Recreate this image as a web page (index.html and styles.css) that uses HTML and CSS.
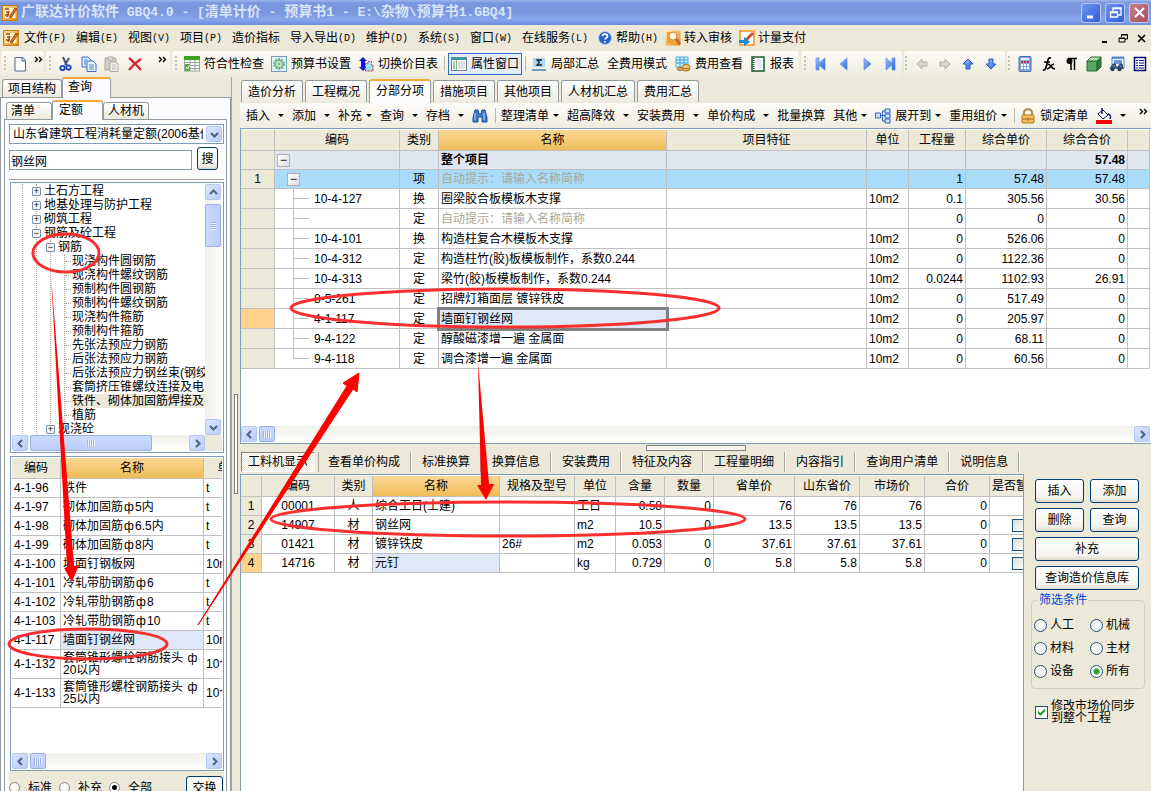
FILE: index.html
```html
<!DOCTYPE html>
<html lang="zh-CN">
<head>
<meta charset="utf-8">
<title>广联达计价软件 GBQ4.0</title>
<link rel="stylesheet" href="styles.css">
</head>
<body>
<svg class="defs" width="0" height="0" aria-hidden="true">
  <defs>
    <linearGradient id="gold" x1="0" y1="0" x2="1" y2="1"><stop offset="0" stop-color="#ffe9a8"/><stop offset="1" stop-color="#e58a10"/></linearGradient>
    <linearGradient id="blue" x1="0" y1="0" x2="1" y2="1"><stop offset="0" stop-color="#9cc4ff"/><stop offset="1" stop-color="#2a66d8"/></linearGradient>
    <symbol id="app" viewBox="0 0 16 16"><rect x=".5" y=".5" width="15" height="15" fill="url(#gold)" stroke="#c87d12"/><rect x="2.500" y="3" width="11" height="10" fill="#fff3cf"/><path d="M3 4h4M4 7h3M3 10h4M5 12l2-6M9 12l4-8" stroke="#a64b10" stroke-width="1.500" fill="none"/><path d="M7 12l6-9 2 1-6 9z" fill="#d9781a" stroke="#7a3607" stroke-width=".7"/></symbol>
    <symbol id="left" viewBox="0 0 9 9"><path d="M6 1L2.500 4.500 6 8" fill="none" stroke="#4d6185" stroke-width="2"/></symbol>
    <symbol id="right" viewBox="0 0 9 9"><path d="M3 1l3.500 3.500L3 8" fill="none" stroke="#4d6185" stroke-width="2"/></symbol>
    <symbol id="up" viewBox="0 0 9 9"><path d="M1 6l3.500-3.500L8 6" fill="none" stroke="#4d6185" stroke-width="2"/></symbol>
    <symbol id="down" viewBox="0 0 9 9"><path d="M1 3l3.500 3.500L8 3" fill="none" stroke="#4d6185" stroke-width="2"/></symbol>
    <symbol id="more" viewBox="0 0 9 7"><path d="M1 1l2.500 2.500L1 6M5 1l2.500 2.500L5 6" fill="none" stroke="#000" stroke-width="1.400"/></symbol>
  </defs>
</svg>

<header class="titlebar">
  <svg class="ic"><use href="#app"/></svg>
  <h1><span>广联达计价软件</span> GBQ4.0 - [<span>清单计价</span> - <span>预算书</span>1 - E:\<span>杂物</span>\<span>预算书</span>1.GBQ4]</h1>
  <div class="winbtns">
    <button aria-label="最小化"><svg width="17" height="17"><path d="M4 13h6" stroke="#fff" stroke-width="3"/></svg></button>
    <button aria-label="还原"><svg width="17" height="17"><path d="M6 7V4h8v7h-3M6 4.500h8M3.500 8h7v5h-7zM3.500 8.500h7" stroke="#fff" fill="none" stroke-width="1.300"/></svg></button>
    <button class="close" aria-label="关闭"><svg width="17" height="17"><path d="M4 4l9 9M13 4l-9 9" stroke="#fff" stroke-width="2"/></svg></button>
  </div>
</header>

<nav class="menubar">
  <svg class="ic"><use href="#app"/></svg>
  <button class="m1">文件<i>(F)</i></button><button class="m1">编辑<i>(E)</i></button><button class="m1">视图<i>(V)</i></button><button class="m1">项目<i>(P)</i></button><button class="m2">造价指标</button><button class="m3">导入导出<i>(D)</i></button><button class="m1">维护<i>(D)</i></button><button class="m1">系统<i>(S)</i></button><button class="m1">窗口<i>(W)</i></button><button class="m3">在线服务<i>(L)</i></button>
  <button class="m4"><svg class="ic" viewBox="0 0 16 16"><circle cx="8" cy="8" r="6.500" fill="#2464d2" stroke="#b9cdf2"/><path d="M5.500 6.300c0-3 5-3 5 0 0 1.700-2.500 1.700-2.500 3.200M8 11v1.600" stroke="#fff" stroke-width="1.700" fill="none"/></svg>帮助<i>(H)</i></button>
  <button class="m4"><svg class="ic" viewBox="0 0 16 16"><rect x=".5" y=".5" width="15" height="15" fill="url(#gold)"/><path d="M2 2h7v11H2z" fill="#f0a22c"/><circle cx="8" cy="6" r="4" fill="#fff6dd" stroke="#d08a3c"/><path d="M11 9l4 5" stroke="#b06a30" stroke-width="2.500"/></svg>转入审核</button>
  <button class="m4"><svg class="ic" viewBox="0 0 16 16"><path d="M1 1h14v14H1z" fill="#fff" stroke="#f0941c" stroke-width="1.500"/><path d="M6 9l7-7 2 2-7 7z" fill="#d34b22"/><path d="M0 10h5V7l6 5-6 4v-3H0z" fill="#2389d4"/></svg>计量支付</button>
  <div class="mdibtns">
    <button aria-label="最小化子窗口"><svg width="11" height="11"><path d="M2 9h5" stroke="#000" stroke-width="2"/></svg></button>
    <button aria-label="还原子窗口"><svg width="11" height="11"><path d="M3.500 4V1.500h6V6H7M1 5h6v4H1zM1 5.500h6M3.500 2h6" stroke="#000" fill="none"/></svg></button>
    <button aria-label="关闭子窗口"><svg width="11" height="11"><path d="M2 2l7 7M9 2L2 9" stroke="#000" stroke-width="1.600"/></svg></button>
  </div>
</nav>

<div class="toolbars">
  <div class="bar g1"><b class="grip"></b>
    <button aria-label="新建"><svg class="ic" viewBox="0 0 16 16"><path d="M3 1.500h8l2.500 3V15H3z" fill="#fff" stroke="#52688c"/><path d="M10 1.500V5h3.500" fill="#c9d6ea" stroke="#52688c"/></svg></button>
    <button class="chev" aria-label="更多"><svg width="9" height="7"><use href="#more"/></svg></button>
  </div>
  <div class="bar g2"><b class="grip"></b>
    <button aria-label="剪切"><svg class="ic" viewBox="0 0 16 16"><path d="M5 1l4 9M11 2L7 9" stroke="#46586e" stroke-width="2"/><circle cx="4.500" cy="12" r="2.200" fill="none" stroke="#1542b8" stroke-width="1.800"/><circle cx="10.500" cy="11.500" r="2.200" fill="none" stroke="#1542b8" stroke-width="1.800"/></svg></button>
    <button aria-label="复制"><svg class="ic" viewBox="0 0 16 16"><path d="M1 1h6l3 3v7H1z" fill="#d9e8ff" stroke="#3f72c4"/><path d="M6 5h6l3 3v7.500H6z" fill="#eaf3ff" stroke="#3f72c4"/><path d="M8 9h5M8 11h5M8 13h5M3 4h3M3 6h2M3 8h2" stroke="#4d86dd"/></svg></button>
    <button aria-label="粘贴"><svg class="ic" viewBox="0 0 16 16"><path d="M1 2h11v12H1z" fill="#cfcdc4" stroke="#aaa89e"/><path d="M4 1h5v3H4z" fill="#e8e6de" stroke="#aaa89e"/><path d="M6 6h6l2 2v7.500H6z" fill="#f2f1ec" stroke="#aaa89e"/><path d="M8 9h4M8 11h4M8 13h4" stroke="#bbb"/></svg></button>
    <button aria-label="删除"><svg class="ic" viewBox="0 0 16 16"><path d="M2 2c4 3 8 8 12 12M14 3C9 6 5 10 2 14" stroke="#d81e30" stroke-width="2.200" fill="none"/></svg></button>
    <button class="chev" aria-label="更多"><svg width="9" height="7"><use href="#more"/></svg></button>
  </div>
  <div class="bar g3"><b class="grip"></b>
    <button><svg class="ic" viewBox="0 0 16 16"><rect x=".5" y="1" width="15" height="14" fill="#fff" stroke="#9aa5a0"/><path d="M0 0h16v4H0z" fill="#3fa51c"/><path d="M0 6.500h16M0 9.500h16M0 12.500h16M6 4v11M11 4v11" stroke="#90a49a"/><path d="M1 8h5v7H1z" fill="#65a944"/><path d="M2 11l1.500 2L6 9" stroke="#fff" fill="none"/></svg>符合性检查</button>
    <button><svg class="ic" viewBox="0 0 16 16"><rect x=".5" y=".5" width="15" height="15" fill="#e6f1f6" stroke="#6c9cc4"/><circle cx="8" cy="8" r="4.800" fill="none" stroke="#5aab6c" stroke-width="2" stroke-dasharray="2 1"/><circle cx="8" cy="8" r="3.500" fill="#d7efdb" stroke="#5aab6c"/><circle cx="8" cy="8" r="1" fill="#fff" stroke="#5aab6c"/></svg>预算书设置</button>
    <button><svg class="ic" viewBox="0 0 16 16"><path d="M5 1l4 4H7v6h2l-4 4-4-4h2V5H1z" fill="#1212d8"/><path d="M7.500 15V7h3V5.500h3V9H15v6z" fill="#9fe3ea" stroke="#e02c2c" stroke-dasharray="2 1"/></svg>切换价目表</button>
    <b class="sep"></b>
    <button class="on"><svg class="ic" viewBox="0 0 16 16"><rect x=".5" y="1.500" width="15" height="13" fill="#fff" stroke="#6b7f90"/><path d="M1 1h14v3H1z" fill="#3c9ba2"/><path d="M5.500 4v10" stroke="#9aa"/><path d="M2 6h2M2 8h2M2 10h2M2 12h2" stroke="#3da243"/><path d="M7 6h7M7 8h7M7 10h7M7 12h7" stroke="#b5c6c9"/></svg>属性窗口</button>
    <b class="sep"></b>
    <button><svg class="ic" viewBox="0 0 16 16"><path d="M2 2h12v9H2z" fill="#a9dbf2"/><path d="M1 13h14v2H1z" fill="#6d9cb4"/><path d="M11 4H6l2.500 2.500L6 9h5" fill="none" stroke="#222" stroke-width="1.300"/></svg>局部汇总</button>
    <button class="plain">全费用模式</button>
    <button><svg class="ic" viewBox="0 0 16 16"><path d="M1 1h12v10H1z" fill="#dff2fd" stroke="#4fa3dc"/><path d="M1 4h12M1 7h12M5 1v10M9 1v10" stroke="#5db4ea" stroke-width="1.500"/><ellipse cx="11" cy="13" rx="4" ry="2" fill="#e3b04e" stroke="#a8752a"/><ellipse cx="11" cy="10.500" rx="4" ry="2" fill="#f3cf7d" stroke="#a8752a"/><ellipse cx="5" cy="13" rx="3" ry="1.500" fill="#e3b04e" stroke="#a8752a"/></svg>费用查看</button>
    <button><svg class="ic" viewBox="0 0 16 16"><rect x="2" y="1" width="12" height="14" fill="#fff" stroke="#1c5a2a" stroke-width="1.500"/><path d="M3.500 2v13" stroke="#1c5a2a" stroke-dasharray="1 1" stroke-width="2"/><path d="M6 4h6M6 6h6M6 8h6M6 10h6M6 12h6" stroke="#ccd8e8"/></svg>报表</button>
  </div>
  <div class="bar g4"><b class="grip"></b>
    <button aria-label="首条"><svg class="ic" viewBox="0 0 16 16"><path d="M3 2h3v5l6-5v12L6 9v5H3z" fill="url(#blue)" stroke="#4b80dc" stroke-width=".6"/></svg></button>
    <button aria-label="上一条"><svg class="ic" viewBox="0 0 16 16"><path d="M11 2v12L4 8z" fill="url(#blue)" stroke="#4b80dc" stroke-width=".6"/></svg></button>
    <button aria-label="下一条"><svg class="ic" viewBox="0 0 16 16"><path d="M5 2v12l7-6z" fill="url(#blue)" stroke="#4b80dc" stroke-width=".6"/></svg></button>
    <button aria-label="末条"><svg class="ic" viewBox="0 0 16 16"><path d="M13 2h-3v5L4 2v12l6-5v5h3z" fill="url(#blue)" stroke="#4b80dc" stroke-width=".6"/></svg></button>
  </div>
  <div class="bar g5"><b class="grip"></b>
    <button aria-label="左移"><svg class="ic" viewBox="0 0 16 16"><path d="M3 8l5-5v3h5v4H8v3z" fill="#d6d5cf" stroke="#b0aea6"/></svg></button>
    <button aria-label="右移"><svg class="ic" viewBox="0 0 16 16"><path d="M13 8L8 3v3H3v4h5v3z" fill="#d6d5cf" stroke="#b0aea6"/></svg></button>
    <button aria-label="上移"><svg class="ic" viewBox="0 0 16 16"><path d="M8 3l5 5h-3v5H6V8H3z" fill="url(#blue)" stroke="#2458c4"/></svg></button>
    <button aria-label="下移"><svg class="ic" viewBox="0 0 16 16"><path d="M8 13l5-5h-3V3H6v5H3z" fill="url(#blue)" stroke="#2458c4"/></svg></button>
  </div>
  <div class="bar g6"><b class="grip"></b>
    <button aria-label="计算器"><svg class="ic" viewBox="0 0 16 16"><rect x="2" y=".5" width="12" height="15" rx="1" fill="#86a8e2" stroke="#4868a8"/><path d="M4 3h8" stroke="#e8f2ff" stroke-width="2"/><path d="M4 6h8" stroke="#d43030" stroke-width="2" stroke-dasharray="2 1"/><path d="M4 9h8M4 12h8" stroke="#fff" stroke-width="2" stroke-dasharray="2 1"/></svg></button>
    <button aria-label="函数"><svg class="ic" viewBox="0 0 16 16"><path d="M11 2C8 1 8 4 7 8s-2 7-4 6M4 6h6M8 8c3 0 3 5 7 5M14 8c-3 0-4 5-7 5" stroke="#000" stroke-width="1.700" fill="none"/></svg></button>
    <button aria-label="段落"><svg class="ic" viewBox="0 0 16 16"><path d="M8 2v12M11.500 2v12M5 2.500h9" stroke="#000" stroke-width="1.500"/><circle cx="6.500" cy="5" r="3" fill="#000"/></svg></button>
    <button aria-label="模型"><svg class="ic" viewBox="0 0 16 16"><path d="M1 5h10v10H1z" fill="#58a463" stroke="#256a31"/><path d="M1 5l4-4h10l-4 4z" fill="#b5dfb5" stroke="#256a31"/><path d="M11 5l4-4v10l-4 4z" fill="#2f7a3c" stroke="#256a31"/></svg></button>
    <button aria-label="查找"><svg class="ic" viewBox="0 0 16 16"><path d="M3 1h12v11H3z" fill="#f0f6ff" stroke="#5c88cf"/><path d="M3 2h12M5 5h8M5 7h8" stroke="#3e74cf" stroke-width="1.500"/><path d="M1 13l3-5h2l1 3h2l2-3h2l1 5" fill="#53708f" stroke="#1f3752"/><circle cx="3.500" cy="13" r="2.200" fill="#24405e"/><circle cx="10.500" cy="13" r="2.200" fill="#24405e"/></svg></button>
    <button aria-label="清单"><svg class="ic" viewBox="0 0 16 16"><rect x="2.500" y="1.500" width="11" height="13" fill="#fff" stroke="#06067a" stroke-width="1.500"/><path d="M4 4.500h2M7 4.500h5M4 7h2M7 7h5M4 9.500h2M7 9.500h5M4 12h2M7 12h5" stroke="#06067a"/></svg></button>
  </div>
</div>

<main class="work">
  <aside class="side">
    <div class="tabs outer-tabs"><button class="tab">项目结构</button><button class="tab active">查询</button></div>
    <div class="outer">
      <div class="tabs inner-tabs"><button class="tab">清单</button><button class="tab active">定额</button><button class="tab">人材机</button></div>
      <div class="inner">
        <div class="pick"><select aria-label="定额库"><option>山东省建筑工程消耗量定额(2006基价)</option></select><span class="sbtn"><svg width="9" height="9"><use href="#down"/></svg></span></div>
        <div class="search"><input type="text" value="钢丝网" aria-label="搜索内容"><button class="xp">搜</button></div>
        <div class="tree">
          <div class="tree-view">
            <ul class="root"><li><ul>
              <li><div class="node"><button class="tg" aria-label="展开">+</button>土石方工程</div></li>
              <li><div class="node"><button class="tg" aria-label="展开">+</button>地基处理与防护工程</div></li>
              <li><div class="node"><button class="tg" aria-label="展开">+</button>砌筑工程</div></li>
              <li><div class="node"><button class="tg" aria-label="折叠">−</button>钢筋及砼工程</div>
                <ul>
                  <li><div class="node"><button class="tg" aria-label="折叠">−</button>钢筋</div>
                    <ul>
                      <li class="leaf"><span>现浇构件圆钢筋</span></li>
                      <li class="leaf"><span>现浇构件螺纹钢筋</span></li>
                      <li class="leaf"><span>预制构件圆钢筋</span></li>
                      <li class="leaf"><span>预制构件螺纹钢筋</span></li>
                      <li class="leaf"><span>现浇构件箍筋</span></li>
                      <li class="leaf"><span>预制构件箍筋</span></li>
                      <li class="leaf"><span>先张法预应力钢筋</span></li>
                      <li class="leaf"><span>后张法预应力钢筋</span></li>
                      <li class="leaf"><span>后张法预应力钢丝束(钢绞线)</span></li>
                      <li class="leaf"><span>套筒挤压锥螺纹连接及电</span></li>
                      <li class="leaf sel"><span>铁件、砌体加固筋焊接及</span></li>
                      <li class="leaf"><span>植筋</span></li>
                    </ul>
                  </li>
                  <li><div class="node"><button class="tg" aria-label="展开">+</button>现浇砼</div></li>
                </ul>
              </li>
            </ul></li></ul>
          </div>
          <div class="vbar"><span class="sbtn"><svg width="9" height="9"><use href="#up"/></svg></span><span class="vthumb"></span><span class="sbtn end"><svg width="9" height="9"><use href="#down"/></svg></span></div>
          <div class="hbar"><span class="sbtn"><svg width="9" height="9"><use href="#left"/></svg></span><span class="hthumb long"></span><span class="sbtn end"><svg width="9" height="9"><use href="#right"/></svg></span></div>
          <div class="corner"></div>
        </div>
        <div class="quota">
          <div class="clip">
          <table class="grid quota-grid">
            <colgroup><col class="q1"><col class="q2"><col class="q3"></colgroup>
            <thead><tr><th>编码</th><th class="hot">名称</th><th>单位</th></tr></thead>
            <tbody>
              <tr><td>4-1-96</td><td>铁件</td><td>t</td></tr>
              <tr><td>4-1-97</td><td>砌体加固筋<i class="phi">ф</i>5内</td><td>t</td></tr>
              <tr><td>4-1-98</td><td>砌体加固筋<i class="phi">ф</i>6.5内</td><td>t</td></tr>
              <tr><td>4-1-99</td><td>砌体加固筋<i class="phi">ф</i>8内</td><td>t</td></tr>
              <tr><td>4-1-100</td><td>墙面钉钢板网</td><td>10m2</td></tr>
              <tr><td>4-1-101</td><td>冷轧带肋钢筋<i class="phi">ф</i>6</td><td>t</td></tr>
              <tr><td>4-1-102</td><td>冷轧带肋钢筋<i class="phi">ф</i>8</td><td>t</td></tr>
              <tr><td>4-1-103</td><td>冷轧带肋钢筋<i class="phi">ф</i>10</td><td>t</td></tr>
              <tr><td>4-1-117</td><td class="pale">墙面钉钢丝网</td><td>10m2</td></tr>
              <tr class="tall"><td>4-1-132</td><td>套筒锥形螺栓钢筋接头 <i class="phi">ф</i><br>20以内</td><td>10个</td></tr>
              <tr class="tall"><td>4-1-133</td><td>套筒锥形螺栓钢筋接头 <i class="phi">ф</i><br>25以内</td><td>10个</td></tr>
            </tbody>
          </table>
          </div>
          <div class="hbar"><span class="sbtn"><svg width="9" height="9"><use href="#left"/></svg></span><span class="hthumb"></span><span class="sbtn end"><svg width="9" height="9"><use href="#right"/></svg></span></div>
        </div>
        <div class="scope">
          <label><input type="radio" name="scope">标准</label><label><input type="radio" name="scope">补充</label><label><input type="radio" name="scope" checked>全部</label>
          <button class="xp">交换</button>
        </div>
      </div>
    </div>
  </aside>
  <div class="vsplit"><span></span></div>

  <section class="content">
    <div class="tabs main-tabs"><button class="tab">造价分析</button><button class="tab">工程概况</button><button class="tab active">分部分项</button><button class="tab">措施项目</button><button class="tab">其他项目</button><button class="tab">人材机汇总</button><button class="tab">费用汇总</button></div>
    <div class="actions">
      <button class="dd wide">插入</button><button class="dd wide">添加</button><button class="dd">补充</button><button class="dd wide">查询</button><button class="dd wide">存档</button>
      <button aria-label="查找"><svg class="ic" viewBox="0 0 16 16"><path d="M3 2h3l1 4h2l1-4h3l2 8v4H10V9H6v5H1v-4z" fill="#3f78cf" stroke="#1d4a92"/><path d="M3 5v7M12 5v7" stroke="#b7d5ff"/></svg></button>
      <b class="sep"></b>
      <button class="dd">整理清单</button><button class="dd wide">超高降效</button><button class="dd wide">安装费用</button><button class="dd wide">单价构成</button><button>批量换算</button><button class="dd">其他</button>
      <button class="dd"><svg class="ic" viewBox="0 0 16 16"><path d="M0.500 5h5v5h-5zM10 1h5v4h-5zM10 6h5v4h-5zM10 11h5v4h-5z" fill="#cfe3ff" stroke="#2b62b8"/><path d="M5 7.500h5M7.500 7.500V3H10M7.500 7.500V13H10" stroke="#2b62b8" fill="none"/></svg>展开到</button><button class="dd">重用组价</button>
      <b class="sep"></b>
      <button><svg class="ic" viewBox="0 0 16 16"><path d="M4 8V5c0-5 8-5 8 0v3" fill="none" stroke="#b58c3f" stroke-width="2"/><rect x="2" y="7" width="12" height="8" rx="1" fill="#f3c15a" stroke="#b07a1c"/><path d="M8 9v4M2 11h12" stroke="#a26c14"/></svg>锁定清单</button>
      <button class="dd wide" aria-label="填充颜色"><svg class="ic" viewBox="0 0 16 16"><path d="M2 6l5-4 5 5-5 4z" fill="#fff" stroke="#111a70"/><path d="M6 0v6M12 6c3 1 3 3 2 5" stroke="#111a70" fill="none" stroke-width="1.500"/><path d="M0 12h16v4H0z" fill="#f00"/></svg></button>
      <button class="chev" aria-label="更多"><svg width="9" height="7"><use href="#more"/></svg></button>
    </div>

    <div class="upper">
      <div class="clip">
      <table class="grid bill">
        <colgroup><col class="b1"><col class="b2"><col class="b3"><col class="b4"><col><col class="b6"><col class="b7"><col class="b8"><col class="b9"><col class="b10"></colgroup>
        <thead><tr><th></th><th>编码</th><th>类别</th><th class="hot">名称</th><th>项目特征</th><th>单位</th><th>工程量</th><th>综合单价</th><th>综合合价</th><th></th></tr></thead>
        <tbody>
          <tr class="total"><th></th><td class="code"><div><button class="box" aria-label="折叠">−</button></div></td><td></td><td>整个项目</td><td></td><td></td><td></td><td></td><td>57.48</td><td></td></tr>
          <tr class="item"><th>1</th><td class="code"><div><button class="box sub" aria-label="折叠">−</button></div></td><td>项</td><td class="hint">自动提示：请输入名称简称</td><td></td><td></td><td>1</td><td>57.48</td><td>57.48</td><td></td></tr>
          <tr><th></th><td class="code"><div><b class="br"></b>10-4-127</div></td><td>换</td><td>圈梁胶合板模板木支撑</td><td></td><td>10m2</td><td>0.1</td><td>305.56</td><td>30.56</td><td></td></tr>
          <tr><th></th><td class="code"><div><b class="br"></b></div></td><td>定</td><td class="hint">自动提示：请输入名称简称</td><td></td><td></td><td>0</td><td>0</td><td>0</td><td></td></tr>
          <tr><th></th><td class="code"><div><b class="br"></b>10-4-101</div></td><td>换</td><td>构造柱复合木模板木支撑</td><td></td><td>10m2</td><td>0</td><td>526.06</td><td>0</td><td></td></tr>
          <tr><th></th><td class="code"><div><b class="br"></b>10-4-312</div></td><td>定</td><td>构造柱竹(胶)板模板制作，系数0.244</td><td></td><td>10m2</td><td>0</td><td>1122.36</td><td>0</td><td></td></tr>
          <tr><th></th><td class="code"><div><b class="br"></b>10-4-313</div></td><td>定</td><td>梁竹(胶)板模板制作，系数0.244</td><td></td><td>10m2</td><td>0.0244</td><td>1102.93</td><td>26.91</td><td></td></tr>
          <tr><th></th><td class="code"><div><b class="br"></b>8-5-261</div></td><td>定</td><td>招牌灯箱面层 镀锌铁皮</td><td></td><td>10m2</td><td>0</td><td>517.49</td><td>0</td><td></td></tr>
          <tr><th class="cur"></th><td class="code"><div><b class="br"></b>4-1-117</div></td><td>定</td><td class="focus">墙面钉钢丝网</td><td></td><td>10m2</td><td>0</td><td>205.97</td><td>0</td><td></td></tr>
          <tr><th></th><td class="code"><div><b class="br"></b>9-4-122</div></td><td>定</td><td>醇酸磁漆增一遍 金属面</td><td></td><td>10m2</td><td>0</td><td>68.11</td><td>0</td><td></td></tr>
          <tr><th></th><td class="code"><div><b class="br last"></b>9-4-118</div></td><td>定</td><td>调合漆增一遍 金属面</td><td></td><td>10m2</td><td>0</td><td>60.56</td><td>0</td><td></td></tr>
        </tbody>
      </table>
      </div>
      <div class="hbar"><span class="sbtn"><svg width="9" height="9"><use href="#left"/></svg></span><span class="hthumb"></span><span class="sbtn end"><svg width="9" height="9"><use href="#right"/></svg></span></div>
    </div>
    <div class="hsplit"><span></span></div>

    <div class="lower">
      <div class="detail">
        <div class="subtabs"><button class="pressed">工料机显示</button><button>查看单价构成</button><button>标准换算</button><button>换算信息</button><button>安装费用</button><button>特征及内容</button><button>工程量明细</button><button>内容指引</button><button>查询用户清单</button><button>说明信息</button></div>
        <div class="clip framed">
        <table class="grid res">
          <colgroup><col class="r1"><col class="r2"><col class="r3"><col class="r4"><col class="r5"><col class="r6"><col class="r7"><col class="r7"><col class="r9"><col class="r10"><col class="r10"><col class="r10"><col></colgroup>
          <thead><tr><th></th><th>编码</th><th>类别</th><th class="hot">名称</th><th>规格及型号</th><th>单位</th><th>含量</th><th>数量</th><th>省单价</th><th>山东省价</th><th>市场价</th><th>合价</th><th class="cutoff">是否暂估</th></tr></thead>
          <tbody>
            <tr><th>1</th><td>00001</td><td>人</td><td>综合工日(土建)</td><td></td><td>工日</td><td>0.58</td><td>0</td><td>76</td><td>76</td><td>76</td><td>0</td><td></td></tr>
            <tr><th>2</th><td>14907</td><td>材</td><td>钢丝网</td><td></td><td>m2</td><td>10.5</td><td>0</td><td>13.5</td><td>13.5</td><td>13.5</td><td>0</td><td><input type="checkbox" class="ck" aria-label="暂估"></td></tr>
            <tr><th>3</th><td>01421</td><td>材</td><td>镀锌铁皮</td><td>26#</td><td>m2</td><td>0.053</td><td>0</td><td>37.61</td><td>37.61</td><td>37.61</td><td>0</td><td><input type="checkbox" class="ck" aria-label="暂估"></td></tr>
            <tr><th class="cur">4</th><td>14716</td><td>材</td><td class="pale">元钉</td><td></td><td>kg</td><td>0.729</td><td>0</td><td>5.8</td><td>5.8</td><td>5.8</td><td>0</td><td><input type="checkbox" class="ck" aria-label="暂估"></td></tr>
          </tbody>
        </table>
        </div>
      </div>
      <aside class="panel">
        <div class="btns"><button class="xp">插入</button><button class="xp">添加</button><button class="xp">删除</button><button class="xp">查询</button><button class="xp full">补充</button><button class="xp full">查询造价信息库</button></div>
        <fieldset><legend>筛选条件</legend>
          <label><input type="radio" name="f">人工</label><label><input type="radio" name="f">机械</label><label><input type="radio" name="f">材料</label><label><input type="radio" name="f">主材</label><label><input type="radio" name="f">设备</label><label><input type="radio" name="f" class="green" checked>所有</label>
        </fieldset>
        <label class="sync"><input type="checkbox" class="ck" checked><span>修改市场价同步到整个工程</span></label>
      </aside>
    </div>
  </section>
</main>

<svg class="marks" aria-hidden="true">
  <g fill="none" stroke="#f92f2f" stroke-width="3">
    <ellipse cx="66" cy="253" rx="33" ry="19"/>
    <ellipse cx="88" cy="644" rx="79" ry="15"/>
    <ellipse cx="505" cy="308" rx="214" ry="19"/>
    <ellipse cx="508" cy="519" rx="237" ry="17"/>
  </g>
  <g fill="#f00" stroke="none">
    <path d="M51 275L74 566 79 565 72 582 64 568 67 567z"/>
    <path d="M198 625L347 386 343 383 359 373 357 392 353 389z" stroke="#f00"/>
    <path d="M478 362L489 484 494 484 486 500 477 485 481 485z"/>
  </g>
</svg>
</body>
</html>
```
FILE: styles.css
```css
* { box-sizing: border-box; }
body {
  margin: 0; height: 100vh; overflow: hidden; position: relative;
  display: flex; flex-direction: column;
  background: #ece9d8; color: #000;
  font: 12px/14px "Liberation Sans", "Noto Sans CJK SC", sans-serif;
}
button, input, select { font: inherit; color: inherit; margin: 0; }
button { background: none; border: 0; padding: 0; white-space: nowrap; display: flex; align-items: center; flex: none; }
i { font-style: normal; }
.defs { position: absolute; }
.ic { width: 16px; height: 16px; flex: none; }

.titlebar {
  flex: none; height: 25px; display: flex; align-items: center; gap: 3px; padding: 0 2px;
  background: linear-gradient(#9db5ee 0, #7b96e0 3px, #7a96df 12px, #84a6ec 20px, #6d8ade 25px);
}
.titlebar h1 { flex: 1; margin: 0; font: bold 13px/20px "Liberation Mono", "Noto Sans CJK SC", monospace; color: #d8e4f8; white-space: pre; }
.titlebar h1 span { font-size: 14px; }
.winbtns { display: flex; gap: 4px; }
.winbtns button { width: 20px; height: 20px; border: 1px solid #b8c8f2; border-radius: 3px; background: linear-gradient(135deg, #6f95ee, #2e5edc); justify-content: center; }
.winbtns .close { background: linear-gradient(135deg, #c98088, #a94d5a); }

.menubar { flex: none; height: 26px; display: flex; align-items: center; padding: 0 4px 0 3px; }
.menubar > .ic { margin-right: 5px; }
.menubar i { font: 10px "Liberation Mono", monospace; }
.m1 { width: 52px; }
.m2 { width: 58px; }
.m3 { width: 76px; }
.m4 { margin-right: 8px; }
.m4 .ic { margin: 0 3px 0 -1px; }
.mdibtns { margin-left: auto; display: flex; gap: 7px; }

.toolbars { flex: none; height: 26px; display: flex; gap: 2px; padding-left: 1px; }
.bar { display: flex; align-items: center; border-radius: 3px; background: linear-gradient(#fcfbf8, #efecde); padding: 0 3px; height: 25px; }
.grip { flex: none; width: 2px; height: 15px; background: repeating-linear-gradient(#c4c0b0 0 2px, transparent 2px 4px); }
.chev { align-self: flex-start; padding-top: 5px; }
.sep { flex: none; width: 1px; height: 15px; background: #bdb9a8; }
.g1 { width: 43px; gap: 6px; }
.g2 { width: 124px; gap: 7px; }
.g2 .chev { margin-left: auto; }
.g3 { width: 627px; gap: 7px; }
.g3 button { gap: 4px; }
.g3 .sep { margin: 0 -4px 0 -1px; }
.g3 .on { height: 22px; padding: 0 2px; border: 1px solid #316ac5; background: #e6edf8; }
.g3 .on + .sep { margin-left: -4px; margin-right: -2px; }
.g3 .plain { padding: 0 1px; }
.g4, .g5 { width: 101px; gap: 7px; }
.g5, .g6 { padding-left: 1px; }
.g6 { flex: 1; gap: 7px; }

.work { flex: 1; min-height: 0; display: flex; }

.tabs { flex: none; display: flex; align-items: flex-end; }
.tab { border: 1px solid #919b9c; border-bottom: 0; border-radius: 3px 3px 0 0; background: linear-gradient(#fff, #eceade); justify-content: center; }
.tab.active { background: #fcfcfe; border-top: 2px solid #f5a834; position: relative; z-index: 1; margin-bottom: -1px; }

.side { flex: none; width: 231px; display: flex; flex-direction: column; }
.outer-tabs { height: 20px; padding-left: 2px; }
.outer-tabs .tab { height: 18px; padding: 0 5px; }
.outer-tabs .tab.active { height: 21px; padding: 0 18px 3px 5px; }
.outer { flex: 1; min-height: 0; display: flex; flex-direction: column; border: 1px solid #919b9c; border-bottom: 0; background: #fcfcfe; padding: 2px 3px 0; }
.inner-tabs { height: 19px; padding-left: 2px; }
.inner-tabs .tab { height: 17px; padding: 0 4px; }
.inner-tabs .tab:first-child { padding-right: 16px; }
.inner-tabs .tab.active { height: 20px; padding: 0 19px 3px 6px; }
.inner { flex: 1; min-height: 0; display: flex; flex-direction: column; border: 1px solid #919b9c; border-bottom: 0; padding: 4px 2px 0 4px; }
.pick { flex: none; position: relative; height: 20px; border: 1px solid #7f9db9; background: #fff; }
.pick select { width: 100%; height: 18px; border: 0; padding: 0 20px 0 3px; background: none; appearance: none; }
.pick .sbtn { position: absolute; right: 1px; top: 1px; height: 16px; pointer-events: none; }
.search { flex: none; display: flex; gap: 5px; height: 36px; align-items: flex-start; padding-top: 3px; border-bottom: 1px solid #aca899; }
.search input { flex: 1; min-width: 0; height: 20px; margin-top: 3px; border: 1px solid #7f9db9; padding: 0 1px; background: #fff; }
.search button { width: 21px; height: 23px; margin-right: 6px; }
.xp { justify-content: center; border: 1px solid #003c74; border-radius: 3px; background: linear-gradient(#fff, #f3f2ec 80%, #dcd8ca); }

.sbtn { flex: none; width: 16px; height: 16px; border: 1px solid #b4c8f6; border-radius: 2px; background: linear-gradient(135deg, #dbe6ff, #b9cbfa); display: flex; align-items: center; justify-content: center; }
.hbar { flex: none; display: flex; height: 16px; gap: 2px; background: linear-gradient(#f0efe8, #fefefb); }
.end { margin-left: auto; }
.hthumb { width: 16px; border: 1px solid #98b1e4; border-radius: 2px; background: repeating-linear-gradient(90deg, #9fb5ea 0 1px, #eaf0ff 1px 2px) center / 8px 7px no-repeat, linear-gradient(#cbdafe, #bccdfb); }
.hthumb.long { width: 122px; }
.vbar { display: flex; flex-direction: column; gap: 4px; background: linear-gradient(90deg, #f0efe8, #fefefb); }
.vthumb { height: 43px; width: 16px; border: 1px solid #98b1e4; border-radius: 2px; background: repeating-linear-gradient(#9fb5ea 0 1px, #eaf0ff 1px 2px) center / 7px 8px no-repeat, linear-gradient(90deg, #cbdafe, #bccdfb); }
.vbar .end { margin-left: 0; margin-top: auto; }

.tree { flex: none; height: 271px; margin: 2px 0 0 1px; border: 1px solid #7f9db9; background: #fff; padding: 1px; display: grid; grid-template: 1fr 16px / 1fr 17px; }
.corner { background: #ece9d8; }
.tree-view { overflow: hidden; min-width: 0; }
.tree ul { list-style: none; margin: 0 0 0 13px; padding: 0; border-left: 1px dotted #aca899; }
.tree ul.root { margin-left: 10px; }
.tree li { white-space: nowrap; }
.node { display: flex; align-items: center; height: 14px; gap: 3px; }
.tg { width: 9px; height: 9px; margin-left: -5px; border: 1px solid #7b90ad; border-radius: 1px; background: #f4f3ee; font-size: 9px; line-height: 7px; justify-content: center; }
.leaf { display: flex; align-items: center; height: 14px; }
.leaf::before { content: ""; width: 6px; border-top: 1px dotted #aca899; flex: none; }
.leaf span { padding-left: 1px; flex: 1; }
.leaf.sel span { background: #ece9d8; }

.clip { flex: 1; min-height: 0; min-width: 0; overflow: hidden; }
.quota { flex: 1; min-height: 0; margin: 3px 0 0 1px; border: 1px solid #7f9db9; background: #fff; padding: 1px; display: flex; flex-direction: column; }
.grid { width: 100%; table-layout: fixed; border-collapse: separate; border-spacing: 0; }
.grid th, .grid td { height: 19px; padding: 0 2px; border: solid #c0c0c0; border-width: 0 1px 1px 0; overflow: hidden; white-space: nowrap; text-align: left; font-weight: normal; line-height: 14px; }
.grid th { background: #ece9d8; text-align: center; }
.grid thead th { height: 21px; }
.grid th.hot { background: linear-gradient(#fbd795, #efbc58); }
.grid th.cur { background: #ffd38c; }
.grid td.pale { background: #dfe8f6; }
.grid.quota-grid { width: 244px; }
.q1 { width: 49px; }
.q2 { width: 143px; }
.q3 { width: 52px; }
.grid .tall td { height: 29px; line-height: 12px; }
.phi { display: inline-block; width: 12px; text-align: center; }

.scope { flex: none; height: 20px; overflow: hidden; background: #ece9d8; display: flex; align-items: flex-start; padding: 5px 1px 0 0; }
.scope label { display: flex; align-items: center; gap: 8px; width: 50px; height: 23px; }
.scope button { width: 37px; height: 23px; margin-left: auto; }
input[type=radio] { appearance: none; flex: none; width: 13px; height: 13px; border: 1px solid #1d5281; border-radius: 50%; background: radial-gradient(#fff, #eeede6); }
.scope input[type=radio] { width: 11px; height: 11px; border-color: #8a8a80; }
input[type=radio]:checked { background: radial-gradient(#000 0 2px, #fff 3px); }
input[type=radio].green:checked { background: radial-gradient(#21a121 0 2px, #fff 4px); }

.vsplit { flex: none; width: 9px; display: flex; align-items: center; justify-content: center; padding-top: 20px; border-left: 1px solid #aca899; }
.vsplit span { width: 4px; height: 100px; border: 1px solid #808080; background: #fff; }

.content { flex: 1; min-width: 0; display: flex; flex-direction: column; }
.main-tabs { height: 26px; padding: 0 0 1px 1px; gap: 2px; }
.main-tabs .tab { height: 22px; padding: 0 6px; }
.main-tabs .tab.active { height: 24px; padding: 0 6px 2px; }

.actions { flex: none; height: 25px; display: flex; align-items: center; gap: 8px; padding: 0 3px 0 6px; background: linear-gradient(#fcfbf8, #efecde); }
.actions .ic { margin-right: 4px; }
.actions button[aria-label] .ic { margin: 0; }
.actions .sep { margin: 0 -3px 0 -1px; }
.dd::after { content: ""; margin-left: 4px; border: solid transparent; border-width: 3px 3px 0; border-top-color: #000; }
.dd.wide::after { margin-left: 8px; }
.actions .chev { margin-left: auto; }

.upper { flex: none; height: 316px; border: 1px solid #7f9db9; border-right: 0; background: #fff; padding: 1px 1px 1px 0; display: flex; flex-direction: column; }
.b1 { width: 34px; } .b2 { width: 125px; } .b3 { width: 39px; } .b4 { width: 228px; }
.b6 { width: 42px; } .b7 { width: 57px; } .b8, .b9 { width: 81px; } .b10 { width: 22px; }
.bill tbody td { height: 20px; }
.bill .total td, .bill .item td { height: 19px; }
.bill td:nth-child(3) { text-align: center; }
.bill td:nth-child(n+7) { text-align: right; }
.total td { background: #dfe6f0; }
.bill .total td { font-weight: bold; }
.item td { background: #a9dbfa; }
.bill .hint { color: #aca899; }
.bill td.focus { background: #dfe8f6; outline: 3px solid #808080; outline-offset: -1px; position: relative; }
.bill td.code { padding: 0; }
.code div { display: flex; align-items: center; height: 19px; }
.item div, .total div { height: 18px; }
.box { width: 13px; height: 13px; margin-left: 2px; border: 1px solid #b0b0b0; background: linear-gradient(135deg, #fff, #ddd); justify-content: center; font-weight: normal; }
.box.sub { margin-left: 12px; }
.br { width: 16px; height: 20px; margin: 0 5px 0 18px; border-left: 1px solid #c0c0c0; background: linear-gradient(#c0c0c0, #c0c0c0) 0 50% / 100% 1px no-repeat; }
.br.last { height: 10px; align-self: flex-start; background-position: 0 100%; }

.hsplit { flex: none; height: 8px; display: flex; justify-content: center; align-items: center; }
.hsplit span { width: 100px; height: 6px; border: 1px solid #808080; background: #f6f5ef; }

.lower { flex: 1; min-height: 0; display: flex; }
.detail { flex: 1; min-width: 0; display: flex; flex-direction: column; }
.subtabs { flex: none; height: 22px; display: flex; padding: 0 0 1px 1px; overflow: hidden; }
.subtabs button { height: 20px; padding: 0 10px; border-right: 1px solid #aca899; box-shadow: 1px 0 #fff; margin-right: 1px; }
.subtabs .pressed { padding: 0 6px; border: 1px solid #808080; border-color: #808080 #fff #fff #808080; background: repeating-conic-gradient(#fff 0 25%, #ece9d8 0 50%) 0 0 / 2px 2px; margin-right: 3px; box-shadow: 3px 0 #ece9d8, 4px 0 #aca899; }
.framed { border: 1px solid #7f9db9; border-bottom: 0; padding-top: 1px; background: #fff; }
.r1 { width: 21px; } .r2 { width: 73px; } .r3 { width: 38px; } .r4 { width: 127px; } .r5 { width: 75px; }
.r6 { width: 41px; } .r7 { width: 49px; } .r9 { width: 81px; } .r10 { width: 65px; }
.res td:nth-child(2), .res td:nth-child(3) { text-align: center; }
.res td:nth-child(n+7) { text-align: right; }
.grid.res th:last-child, .grid.res td:last-child { padding-right: 0; border-right: 0; text-align: left; }
.ck { appearance: none; flex: none; width: 13px; height: 13px; border: 1px solid #1d5281; background: linear-gradient(135deg, #dcdcd7, #fff); vertical-align: middle; }
.res .ck { margin-left: 20px; }
.sync .ck { display: grid; place-items: center; background: #fff; }
.sync .ck:checked::before { content: ""; width: 9px; height: 9px; background: #21a121; clip-path: polygon(10% 35%, 38% 62%, 90% 8%, 90% 42%, 38% 95%, 10% 68%); }

.panel { flex: none; width: 127px; padding: 27px 6px 0 7px; }
.btns { display: grid; grid-template-columns: 1fr 1fr; gap: 5px 6px; padding: 0 6px 0 4px; }
.btns .xp { height: 24px; }
.full { grid-column: span 2; }
.panel fieldset { margin: 4px 0 0; padding: 12px 2px 10px; border: 1px solid #d0d0bf; border-radius: 4px; display: grid; grid-template-columns: 56px 1fr; gap: 9px 0; min-width: 0; }
.panel legend { color: #0046d5; padding: 0 1px; margin-left: 4px; line-height: 12px; }
.panel fieldset label { display: flex; align-items: center; gap: 3px; }
.sync { display: flex; align-items: center; gap: 3px; padding: 11px 0 0 4px; line-height: 12px; }
.sync span { width: 84px; }

.marks { position: absolute; left: 0; top: 0; width: 100%; height: 100%; pointer-events: none; }
```
